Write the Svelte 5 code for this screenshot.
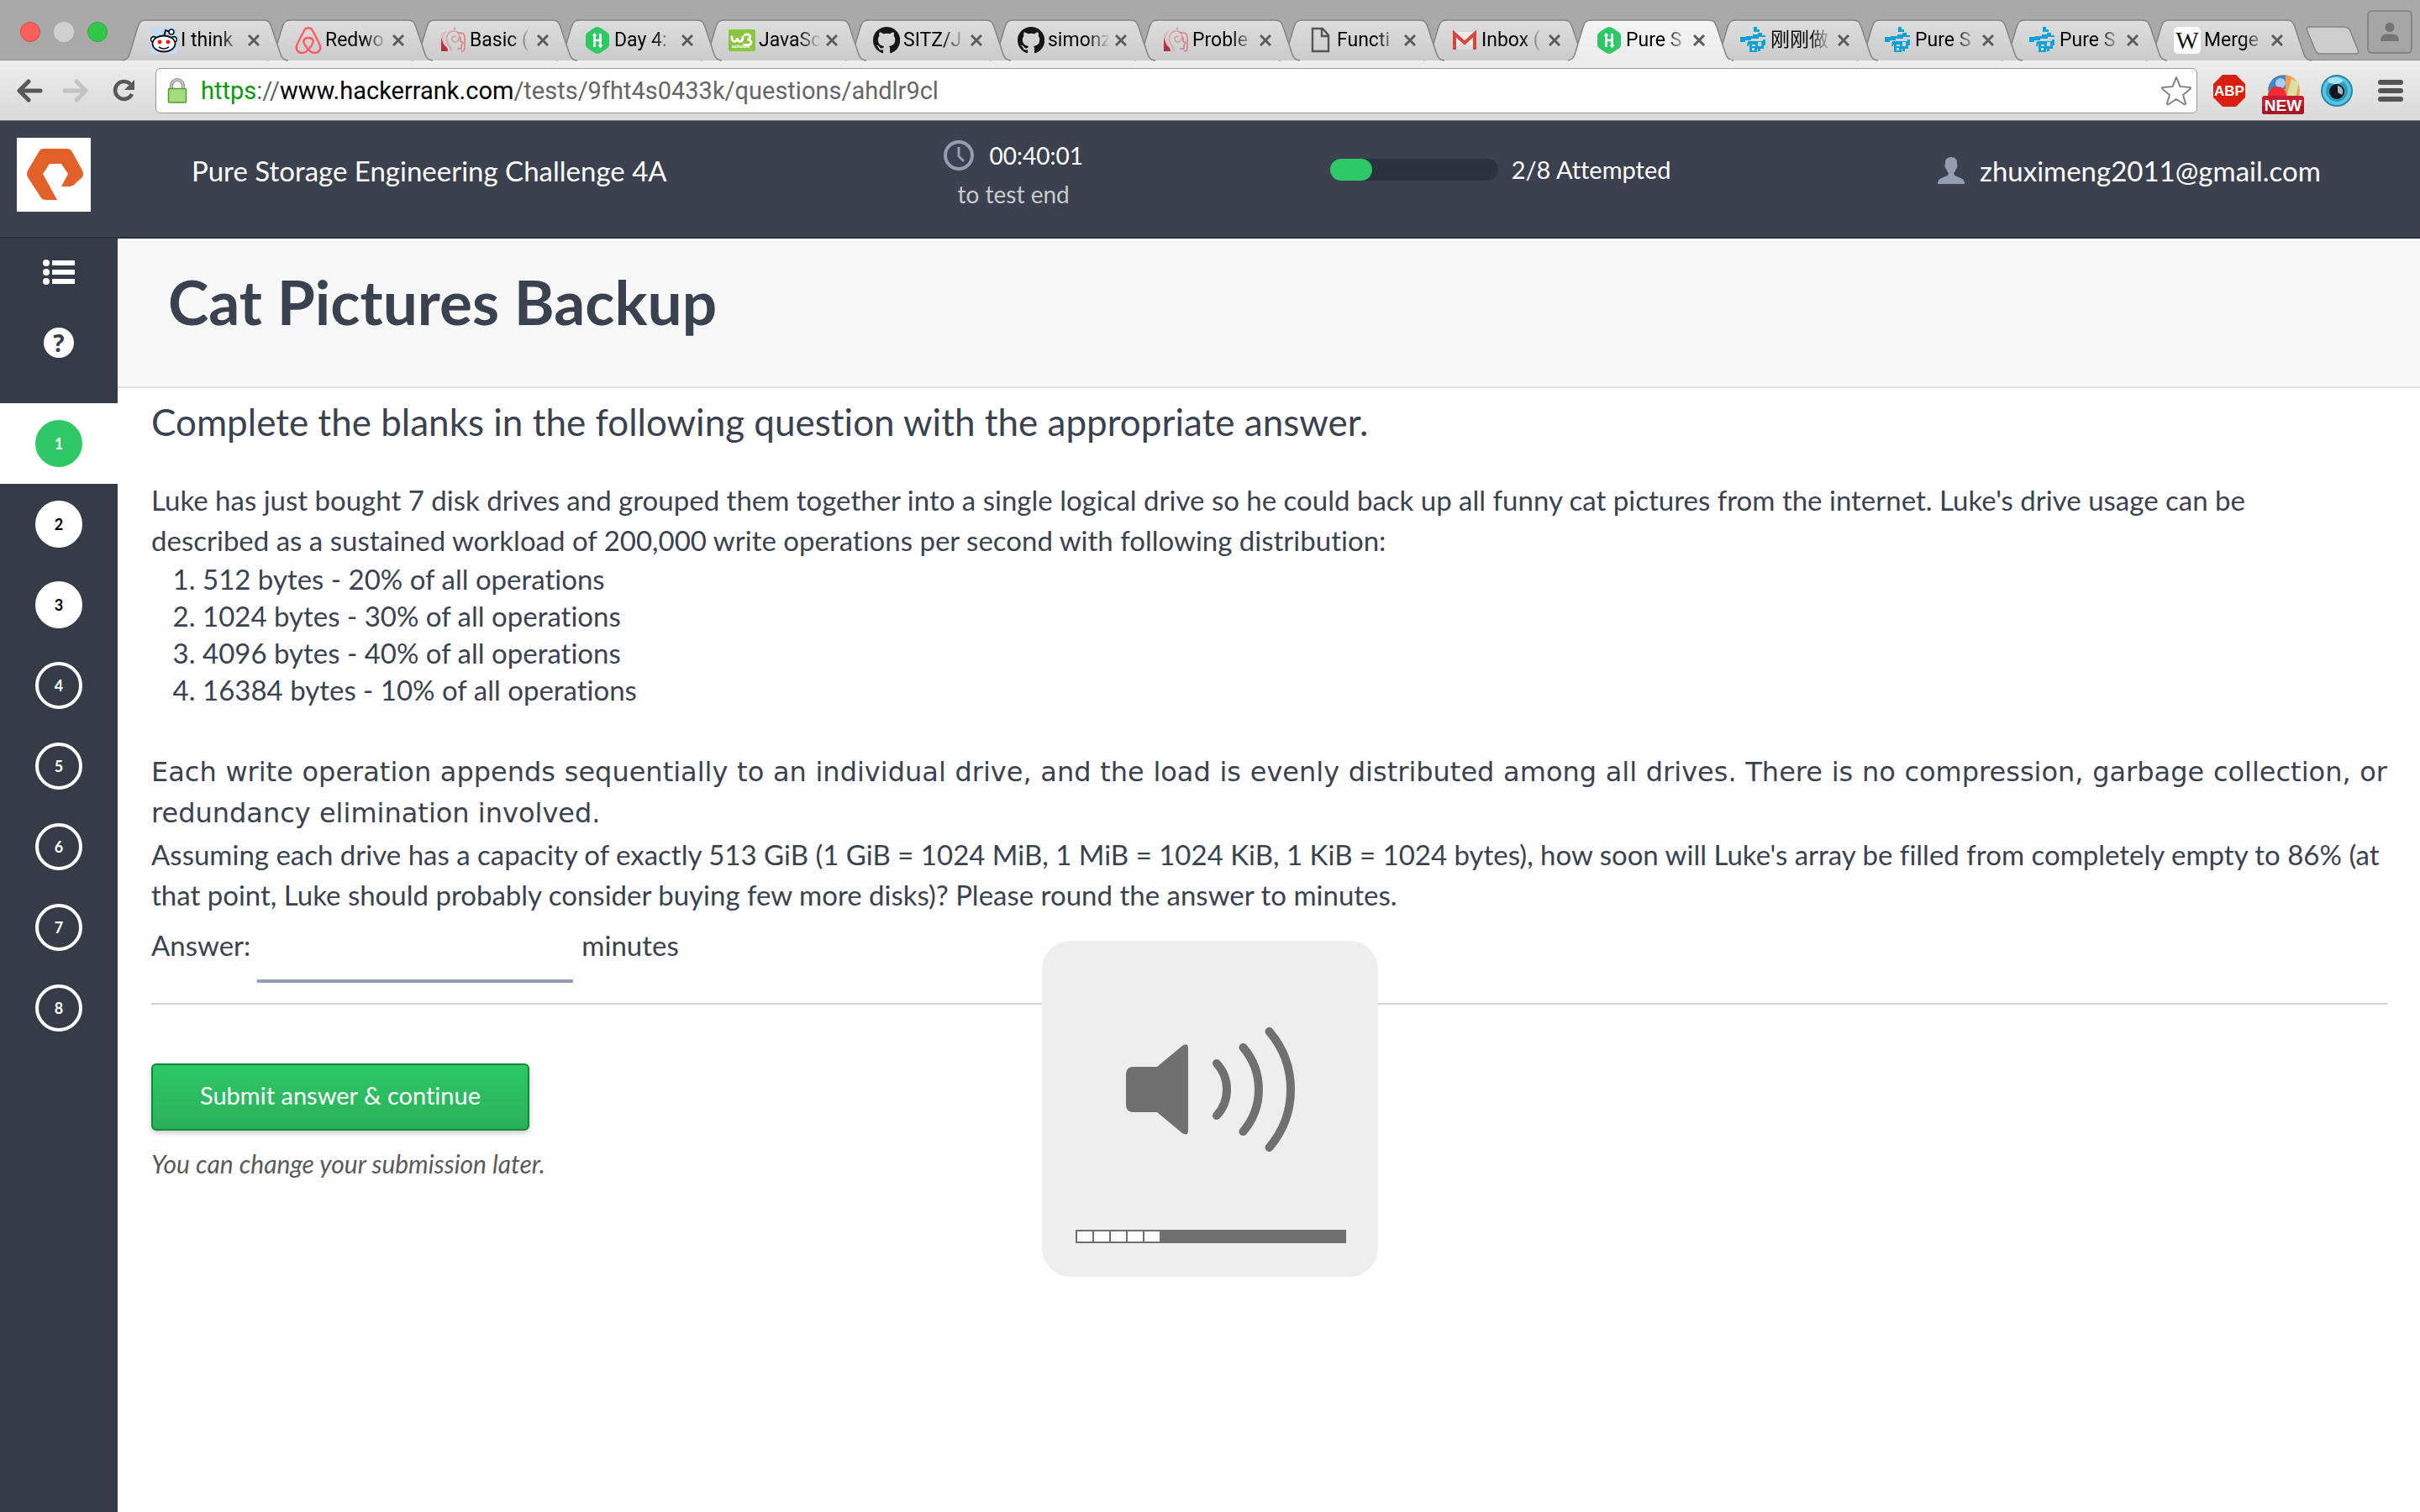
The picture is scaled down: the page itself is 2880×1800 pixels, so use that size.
<script>
  const tabs = [
    { icon: 'reddit', title: 'I think' },
    { icon: 'airbnb', title: 'Redwo' },
    { icon: 'geeks', title: 'Basic (' },
    { icon: 'hacker', title: 'Day 4:' },
    { icon: 'w3', title: 'JavaSc' },
    { icon: 'github', title: 'SITZ/J' },
    { icon: 'github', title: 'simonz' },
    { icon: 'geeks', title: 'Proble' },
    { icon: 'file', title: 'Functi' },
    { icon: 'gmail', title: 'Inbox (' },
    { icon: 'hacker', title: 'Pure S', active: true },
    { icon: 'forum', title: '刚刚做' },
    { icon: 'forum', title: 'Pure S' },
    { icon: 'forum', title: 'Pure S' },
    { icon: 'wiki', title: 'Merge' }
  ];

  const questions = [
    { n: 1, state: 'current' },
    { n: 2, state: 'done' },
    { n: 3, state: 'done' },
    { n: 4, state: 'open' },
    { n: 5, state: 'open' },
    { n: 6, state: 'open' },
    { n: 7, state: 'open' },
    { n: 8, state: 'open' }
  ];

  const workload = [
    '512 bytes - 20% of all operations',
    '1024 bytes - 30% of all operations',
    '4096 bytes - 40% of all operations',
    '16384 bytes - 10% of all operations'
  ];

  const volumeCells = [0, 1, 2, 3, 4];
  const attempted = 2;
  let answer = $state('');
</script>

{#snippet favicon(name)}
  <svg class="favicon" viewBox="0 0 32 32" aria-hidden="true">
    {#if name === 'reddit'}
      <rect width="32" height="32" fill="#c4dcf5" />
      <path d="M16 12l2-8 6 2" fill="none" stroke="#111" stroke-width="2" />
      <circle cx="25" cy="6" r="3" fill="#fff" stroke="#111" stroke-width="1.6" />
      <circle cx="4" cy="15" r="3.4" fill="#fff" stroke="#111" stroke-width="1.6" />
      <circle cx="28" cy="15" r="3.4" fill="#fff" stroke="#111" stroke-width="1.6" />
      <ellipse cx="16" cy="20" rx="13.5" ry="9.5" fill="#fff" stroke="#111" stroke-width="1.8" />
      <circle cx="11" cy="18" r="2.4" fill="#f11" />
      <circle cx="21" cy="18" r="2.4" fill="#f11" />
      <path d="M10 24q6 4 12 0" fill="none" stroke="#111" stroke-width="1.6" />
    {:else if name === 'airbnb'}
      <path
        d="M16 27C11 21 10 18 10.500 16.500C11 14 13 13 16 13s5 1 5.500 3.500C22 18 21 21 16 27zM16 27c-4 4.500-9 5-12 2.500c-2.500-2-3-4.500-1.500-8C5 15.500 9 8 11.500 3.500C13 .500 19 .500 20.500 3.500C23 8 27 15.500 29.500 21.500c1.500 3.500 1 6-1.500 8c-3 2.500-8 2-12-2.500z"
        fill="none" stroke="#ff5a5f" stroke-width="2.400" stroke-linejoin="round" />
    {:else if name === 'geeks'}
      <path d="M3 8c3-3 6-3 6-3c-4 4-5 8-3 13c2 4 4 7 4 11H2V12q0-3 1-4z" fill="#e3b9bc" />
      <path d="M2 12q2 9 5 11q3 2 3 6H2z" fill="#b92d40" />
      <path d="M14 29c1-4-4-7-5-11C7 11 11 5 17 5s8 5 6 10c-2 4-7 4-8 0c-1-3 3-5 5-3" fill="none" stroke="#cfa9ab" stroke-width="1.800" />
      <path d="M21 7h4c4 0 5 3 5 6v12c0 3-1 4-4 4M25 12v5l3 2-2 3v4h-5" fill="none" stroke="#d98088" stroke-width="1.600" />
      <circle cx="18" cy="2" r="1.400" fill="#d3a0a4" />
    {:else if name === 'hacker'}
      <path d="M16 0q2 0 5 2l6 4q3 2 3 4v12q0 2-3 4l-6 4q-3 2-5 2t-5-2l-6-4q-3-2-3-4V10q0-2 3-4l6-4q3-2 5-2z" fill="#2ec866" />
      <path d="M12.500 9v15M19.500 8v15M12.500 16h7" fill="none" stroke="#fff" stroke-width="2.600" />
      <path d="M9.500 10.500l3-3.500 3 3.500zM16.500 21.500h6l-3 4z" fill="#fff" />
    {:else if name === 'w3'}
      <rect y="3" width="32" height="26" rx="2" fill="#8cc63f" />
      <path d="M4 12c0 7 6 7 6.500 1c.500 6 6.500 6 6.500-1M19.500 9.500c7-3 8 5 3 5.500c7 0 6 9-4 6" fill="none" stroke="#fff" stroke-width="2.800" stroke-linecap="round" />
      <text x="4" y="25" class="tiny">schools</text>
    {:else if name === 'github'}
      <path
        d="M16 0A16 16 0 0 0 11 31.200c.800.100 1.100-.400 1.100-.800v-3c-4.500 1-5.400-1.900-5.400-1.900c-.700-1.900-1.800-2.400-1.800-2.400c-1.400-1 .100-1 .100-1c1.600.100 2.500 1.700 2.500 1.700c1.400 2.400 3.800 1.700 4.700 1.300c.100-1 .600-1.700 1-2.100c-3.600-.400-7.300-1.800-7.300-7.900c0-1.700.600-3.200 1.600-4.300c-.200-.400-.700-2 .200-4.200c0 0 1.300-.400 4.400 1.600a15 15 0 0 1 8 0c3-2 4.400-1.600 4.400-1.600c.900 2.200.300 3.800.200 4.200c1 1.100 1.600 2.600 1.600 4.300c0 6.100-3.700 7.500-7.300 7.900c.600.500 1.100 1.500 1.100 3v4.400c0 .400.300.900 1.100.800A16 16 0 0 0 16 0z"
        fill="#171515" />
    {:else if name === 'file'}
      <path d="M7 2h12l7 8v19H7zM18 2v9h8" fill="none" stroke="#555" stroke-width="2.400" />
    {:else if name === 'gmail'}
      <rect x="2" y="6" width="28" height="21" fill="#eee" />
      <path d="M2 27l14-12 14 12z" fill="#ddd" />
      <path d="M4 27V8l12 11L28 8v19" fill="none" stroke="#dc4437" stroke-width="4" />
    {:else if name === 'forum'}
      <path d="M16 0h4v3h3v3h-7V3z" fill="#0aa2d8" />
      <path d="M0 12h7v-1h8V9h6V7h5v3h4v2h-8v2h-9v2H6v2H0z" fill="#0aa2d8" />
      <path d="M9 17h18v-2h3v7h-2v4h-4v3h-3v-3h-1v4H11v-9h-1v2H8z" fill="#0aa2d8" />
      <path d="M14 21h4v2h-4zM14 25h3v3h-3zM21 18h4v5h-4z" fill="#d6d6d6" />
    {:else}
      <rect width="32" height="32" rx="5" fill="#fff" />
      <text x="16" y="26" class="wiki">W</text>
    {/if}
  </svg>
{/snippet}

<div class="screen">
  <div class="browser">
    <div class="strip">
      <div class="lights">
        <button class="light red" aria-label="Close window"></button>
        <button class="light gray" aria-label="Minimise window"></button>
        <button class="light green" aria-label="Zoom window"></button>
      </div>
      <ul class="tabs">
        {#each tabs as tab, i}
          <li class="tab" class:active={tab.active} style:z-index={tab.active ? 20 : 15 - i}>
            <svg class="tab-shape" viewBox="0 0 198 50" aria-hidden="true">
              <defs>
                <linearGradient id="tabfill{i}" x1="0" y1="0" x2="0" y2="1">
                  <stop offset="0" stop-color={tab.active ? '#f5f5f5' : '#dedede'} />
                  <stop offset="1" stop-color={tab.active ? '#ebebeb' : '#cbcbcb'} />
                </linearGradient>
              </defs>
              <path
                d="M0 49C6 48 7 45 9 39L18 9C20 3 22 1 28 1H167C173 1 175 3 177 9L187 39C189 45 190 48 197 49"
                fill="url(#tabfill{i})" stroke="#858585" stroke-width="1.500" />
              {#if tab.active}<rect x="3" y="48" width="192" height="2" fill="#ebebeb" />{/if}
            </svg>
            <a class="tab-link" href="#tab-{i}">
              {@render favicon(tab.icon)}
              <span class="tab-title">{tab.title}</span>
            </a>
            <button class="tab-close" aria-label="Close tab">
              <svg viewBox="0 0 14 14" aria-hidden="true"><path d="M1 1l12 12M13 1L1 13" stroke="#5c5c5c" stroke-width="3" /></svg>
            </button>
          </li>
        {/each}
      </ul>
      <button class="new-tab" aria-label="New tab">
        <svg viewBox="0 0 64 34" aria-hidden="true">
          <path d="M5 1H45Q51 1 53 6L62 28Q64 33 59 33H18Q13 33 11 28L2 6Q0 1 5 1z" fill="#cecece" stroke="#858585" stroke-width="1.500" />
        </svg>
      </button>
      <button class="profile" aria-label="Profile">
        <svg viewBox="0 0 24 24" aria-hidden="true">
          <ellipse cx="12" cy="6" rx="6" ry="6" fill="#747474" />
          <path d="M0 24q0-9 8-9h8q8 0 8 9z" fill="#747474" />
        </svg>
      </button>
    </div>

    <div class="toolbar">
      <button class="tool back" aria-label="Back">
        <svg viewBox="0 0 32 28" aria-hidden="true"><path d="M28 14H4M14 3L3 14l11 11" fill="none" stroke="#585858" stroke-width="5" stroke-linecap="round" stroke-linejoin="round" /></svg>
      </button>
      <button class="tool forward" aria-label="Forward">
        <svg viewBox="0 0 32 28" aria-hidden="true"><path d="M3 14h24M17 3l11 11-11 11" fill="none" stroke="#c3c3c3" stroke-width="5" stroke-linecap="round" stroke-linejoin="round" /></svg>
      </button>
      <button class="tool reload" aria-label="Reload">
        <svg viewBox="0 0 28 28" aria-hidden="true">
          <path d="M22 6A10.500 10.500 0 1 0 24 18" fill="none" stroke="#585858" stroke-width="4.500" />
          <path d="M27 1v12H15z" fill="#585858" />
        </svg>
      </button>
      <div class="omnibox">
        <svg class="lock" viewBox="0 0 24 30" aria-hidden="true">
          <path d="M5 15V9a7 7 0 0 1 14 0v6" fill="none" stroke="#909090" stroke-width="4" />
          <path d="M5 15V9a7 7 0 0 1 14 0v6" fill="none" stroke="#d4d4d4" stroke-width="1.500" />
          <rect x="1.500" y="12.500" width="21" height="16.500" rx="1" fill="#a6dc7e" stroke="#559a35" stroke-width="1.500" />
        </svg>
        <a class="url" href="#address"><span class="scheme">https</span>://<span class="host">www.hackerrank.com</span>/tests/9fht4s0433k/questions/ahdlr9cl</a>
        <button class="star" aria-label="Bookmark this page">
          <svg viewBox="0 0 36 36" aria-hidden="true">
            <path d="M18 2l4.500 11L34 14q2 0 .500 2L26 23l3 10q0 2-2 1l-9-6-9 6q-2 1-2-1l3-10-8.500-7Q0 14 2 14l11.500-1z" fill="#fff" stroke="#858585" stroke-width="2" stroke-linejoin="round" />
          </svg>
        </button>
      </div>
      <button class="ext small" aria-label="Adblock Plus">
        <svg viewBox="0 0 38 38" aria-hidden="true">
          <path d="M11 0h16l11 11v16L27 38H11L0 27V11z" fill="#d92010" />
          <text x="19" y="25" class="abp">ABP</text>
        </svg>
      </button>
      <button class="ext wide" aria-label="New extension">
        <svg viewBox="0 0 50 48" aria-hidden="true">
          <circle cx="26" cy="20" r="19" fill="#f0a050" />
          <path d="M25 20V2A18 18 0 0 0 7 20z" fill="#4a8fd0" />
          <path d="M12 7a18 18 0 0 1 16-5v16H8z" fill="#3f87c9" />
          <circle cx="22" cy="11" r="6" fill="#a9cdf0" />
          <path d="M35 6l9 4-4 18H29z" fill="#d9dfa6" />
          <circle cx="18" cy="26" r="11" fill="#f42a34" />
          <rect y="26" width="50" height="22" rx="3" fill="#c22030" />
          <rect y="38" width="50" height="10" rx="3" fill="#a81622" />
          <text x="25" y="44" class="new">NEW</text>
        </svg>
      </button>
      <button class="ext small" aria-label="Eye extension">
        <svg viewBox="0 0 38 38" aria-hidden="true">
          <circle cx="19" cy="19" r="18" fill="#55c6e2" stroke="#2c86a5" stroke-width="2" />
          <circle cx="19" cy="19" r="13" fill="#2b9cc0" />
          <circle cx="19" cy="20" r="9" fill="#10161a" />
          <path d="M20 13a7 7 0 0 1 5 11l-5-3z" fill="#a9b4b8" />
          <ellipse cx="17" cy="7" rx="9" ry="4" fill="#a6e2f0" />
        </svg>
      </button>
      <button class="ext menu" aria-label="Menu">
        <svg viewBox="0 0 30 26" aria-hidden="true"><path d="M3 3h24M3 13h24M3 23h24" stroke="#555" stroke-width="6" stroke-linecap="round" /></svg>
      </button>
    </div>
  </div>

  <header class="topbar">
    <a class="logo" href="#home" aria-label="Pure Storage">
      <svg viewBox="0 0 88 88" aria-hidden="true">
        <path d="M32 13H59Q64 13 66 17L78 39Q80 43 78 47L70 54Q67 58 62 58H53L61 43L53 31H39L31 43L48 74H35Q30 74 28 70L13 47Q11 43 13 39L26 17Q28 13 32 13z" fill="#e16128" />
      </svg>
    </a>
    <div class="test-name">Pure Storage Engineering Challenge 4A</div>
    <div class="timer">
      <div class="time">
        <svg viewBox="0 0 36 36" aria-hidden="true">
          <circle cx="18" cy="18" r="16" fill="none" stroke="#959eb0" stroke-width="4" />
          <path d="M18 8v11l6 6" fill="none" stroke="#959eb0" stroke-width="3" />
        </svg>
        <span>00:40:01</span>
      </div>
      <div class="until">to test end</div>
    </div>
    <div class="progress">
      <div class="track" role="progressbar" aria-label="Attempted" aria-valuemin="0" aria-valuemax="8" aria-valuenow={attempted}>
        <div class="fill" style:width="{(attempted / questions.length) * 100}%"></div>
      </div>
      <span>{attempted}/{questions.length} Attempted</span>
    </div>
    <div class="user">
      <svg viewBox="0 0 32 32" aria-hidden="true">
        <path d="M16 0c5 0 7.500 3 7 8l.500 2q0 3-1.500 4q-1 3-2.500 4.500q-.500 2 1 3.500l8 3.500q3.500 1.500 3.500 6.500H0q0-5 3.500-6.500l8-3.500q1.500-1.500 1-3.500Q11 17 10 14q-1.500-1-1.500-4L9 8c-.500-5 2-8 7-8z" fill="#959eb0" />
      </svg>
      <span>zhuximeng2011@gmail.com</span>
    </div>
  </header>

  <div class="body">
    <nav class="sidebar" aria-label="Questions">
      <a class="side-icon" href="#list" aria-label="Question list">
        <svg class="list-icon" viewBox="0 0 38 32" aria-hidden="true">
          <circle cx="4" cy="5" r="4" fill="#fff" /><circle cx="4" cy="16" r="4" fill="#fff" /><circle cx="4" cy="27" r="4" fill="#fff" />
          <path d="M11 5h27M11 16h27M11 27h27" stroke="#fff" stroke-width="6" />
        </svg>
      </a>
      <a class="side-icon help" href="#help" aria-label="Help"><span>?</span></a>
      <ol class="questions">
        {#each questions as q}
          <li class={q.state}><a href="#question-{q.n}">{q.n}</a></li>
        {/each}
      </ol>
    </nav>

    <main>
      <div class="heading"><h1>Cat Pictures Backup</h1></div>
      <div class="content">
        <h2>Complete the blanks in the following question with the appropriate answer.</h2>
        <p>Luke has just bought 7 disk drives and grouped them together into a single logical drive so he could back up all funny cat pictures from the internet. Luke's drive usage can be<br />described as a sustained workload of 200,000 write operations per second with following distribution:</p>
        <ol class="workload">
          {#each workload as line}<li>{line}</li>{/each}
        </ol>
        <p class="note-block">Each write operation appends sequentially to an individual drive, and the load is evenly distributed among all drives. There is no compression, garbage collection, or redundancy elimination involved.</p>
        <p>Assuming each drive has a capacity of exactly 513 GiB (1 GiB = 1024 MiB, 1 MiB = 1024 KiB, 1 KiB = 1024 bytes), how soon will Luke's array be filled from completely empty to 86% (at that point, Luke should probably consider buying few more disks)? Please round the answer to minutes.</p>
        <div class="answer">
          <label for="answer">Answer:</label>
          <input id="answer" type="text" bind:value={answer} />
          <span>minutes</span>
        </div>
        <hr />
        <button class="submit">Submit answer &amp; continue</button>
        <p class="later">You can change your submission later.</p>
      </div>
    </main>
  </div>

  <div class="volume" role="status" aria-label="Volume">
    <svg viewBox="0 0 400 400" aria-hidden="true">
      <path d="M109 150H137L167 125Q174 121 174 128V226Q174 233 167 229L137 204H109Q100 204 100 195V159Q100 150 109 150z" fill="#707070" />
      <g fill="none" stroke="#707070" stroke-width="10" stroke-linecap="round">
        <path d="M208 146A46 46 0 0 1 208 208" />
        <path d="M239.500 127A77 77 0 0 1 239.500 227" />
        <path d="M270.500 108A106 106 0 0 1 270.500 246" />
      </g>
      <rect x="40" y="344" width="322" height="16" fill="#707070" />
      {#each volumeCells as cell}
        <rect x={42 + cell * 20} y="346" width="18" height="12" fill="#fff" />
      {/each}
    </svg>
  </div>
</div>

<style>
  :global(body) {
    background: #fff;
  }
  .screen {
    --ink: #3b424f;
    --muted: #959eb0;
    display: flex;
    flex-direction: column;
    min-height: 100vh;
    font-family: Lato, sans-serif;
    font-variant-ligatures: none;
    color: var(--ink);
  }
  button {
    padding: 0;
    border: 0;
    background: none;
    font: inherit;
    cursor: pointer;
  }
  svg {
    display: block;
    width: 100%;
  }
  a {
    color: inherit;
    text-decoration: none;
  }
  ul, ol {
    margin: 0;
    padding: 0;
    list-style: none;
  }

  .browser {
    font-family: Roboto, "Noto Sans CJK SC", sans-serif;
    border-bottom: 1px solid #77797d;
  }
  .strip {
    display: flex;
    align-items: flex-start;
    height: 71px;
    padding: 0 9px 0 24px;
    background: #a9a9a9;
    border-bottom: 1px solid #8c8c8c;
  }
  .lights {
    display: flex;
    gap: 16px;
    padding: 26px 18px 0 0;
  }
  .light {
    width: 24px;
    height: 24px;
    border-radius: 50%;
  }
  .red { background: #fc605b; border: 1px solid #e0443e; }
  .gray { background: #d0d0d0; }
  .green { background: #33c748; border: 1px solid #24a836; }
  .tabs {
    display: flex;
    padding-top: 23px;
  }
  .tab {
    position: relative;
    display: flex;
    align-items: center;
    justify-content: space-between;
    box-sizing: border-box;
    width: 172px;
    height: 50px;
    padding: 0 9px 0 33px;
  }
  .tab-shape {
    position: absolute;
    left: 0;
    top: 0;
    width: 198px;
    height: 50px;
  }
  .tab-link {
    position: relative;
    display: flex;
    align-items: center;
    gap: 4px;
  }
  .favicon {
    flex: none;
    width: 32px;
    height: 32px;
  }
  .tiny { font: 700 6px Roboto, sans-serif; fill: #fff; }
  .wiki { font: 29px "Liberation Serif", serif; text-anchor: middle; fill: #111; }
  .abp { font: 700 17px "Liberation Sans", sans-serif; text-anchor: middle; fill: #fff; }
  .new { font: 700 19px "Liberation Sans", sans-serif; text-anchor: middle; fill: #fff; }
  .tab-title {
    width: 74px;
    white-space: nowrap;
    font-size: 23px;
    line-height: 34px;
    color: #000;
    mask-image: linear-gradient(to right, #000 46px, transparent 74px);
  }
  .tab-close {
    position: relative;
    width: 14px;
  }
  .new-tab {
    width: 64px;
    margin: 31px 0 0 18px;
  }
  .profile {
    box-sizing: border-box;
    width: 54px;
    height: 52px;
    margin: 12px 0 0 auto;
    padding: 0 14px;
    border: 2px solid #858585;
    border-radius: 6px;
    background: #a5a5a5;
  }

  .toolbar {
    display: flex;
    align-items: center;
    height: 71px;
    padding: 0 20px;
    background: linear-gradient(#ededed, #d9d9d9);
  }
  .tool { flex: none; }
  .back { width: 32px; margin-right: 22px; }
  .forward { width: 32px; margin-right: 27px; }
  .reload { width: 28px; margin-right: 24px; }
  .omnibox {
    flex: 1;
    display: flex;
    align-items: center;
    box-sizing: border-box;
    height: 54px;
    margin-right: 19px;
    padding: 0 6px 0 13px;
    border: 1px solid #999;
    border-radius: 6px;
    background: #fff;
  }
  .lock { flex: none; width: 24px; margin-right: 16px; }
  .url {
    flex: 1;
    font-size: 29px;
    line-height: 40px;
    color: #666;
  }
  .scheme { color: #0a9a0a; }
  .host { color: #000; }
  .star { width: 36px; }
  .ext { flex: none; margin-right: 20px; }
  .small { width: 38px; }
  .wide { width: 50px; padding-top: 8px; }
  .menu { width: 30px; margin: 0 0 0 10px; }

  .topbar {
    display: grid;
    grid-template-columns: 228px 78fr 40fr 63fr 50fr;
    align-items: start;
    padding-bottom: 28px;
    background: #3b414e;
    border-bottom: 2px solid #2b313c;
    color: #fff;
  }
  .logo {
    width: 88px;
    margin: 20px 0 0 20px;
    background: #fff;
  }
  .test-name, .user {
    padding-top: 35px;
    font-size: 33px;
    line-height: 48px;
    white-space: nowrap;
  }
  .timer {
    justify-self: start;
    padding-top: 18px;
    font-size: 28px;
    line-height: 46px;
    text-align: center;
  }
  .time {
    display: flex;
    gap: 18px;
  }
  .time svg { width: 36px; }
  .until { color: #c8cacd; }
  .progress {
    display: flex;
    align-items: center;
    gap: 16px;
    padding-top: 35px;
    font-size: 29px;
    line-height: 46px;
  }
  .track {
    width: 200px;
    height: 26px;
    border-radius: 13px;
    background: #2b3341;
  }
  .fill {
    height: 100%;
    border-radius: 13px;
    background: #2ec866;
  }
  .user {
    display: flex;
    align-items: center;
    gap: 18px;
  }
  .user svg { width: 32px; }

  .body {
    flex: 1;
    display: flex;
  }
  .sidebar {
    flex: none;
    width: 140px;
    background: #353b47;
    color: #fff;
  }
  .side-icon {
    display: flex;
    align-items: center;
    justify-content: center;
    height: 80px;
  }
  .help {
    height: 88px;
    margin-bottom: 28px;
  }
  .list-icon { width: 38px; }
  .help span {
    width: 36px;
    border-radius: 50%;
    background: #fff;
    color: #353b47;
    font: 700 28px/36px "Open Sans", sans-serif;
    text-align: center;
  }
  .questions li {
    display: flex;
    align-items: center;
    justify-content: center;
    height: 96px;
  }
  .questions a {
    box-sizing: border-box;
    width: 56px;
    border: 4px solid #fff;
    border-radius: 50%;
    font-size: 18px;
    font-weight: 700;
    line-height: 48px;
    text-align: center;
  }
  .current { background: #fff; }
  .questions .current a { background: #2ec866; border-color: #2ec866; }
  .questions .done a { background: #fff; color: #000; }

  main {
    flex: 1;
    min-width: 0;
  }
  .heading {
    padding: 31px 60px 57px;
    background: #f8f8f8;
    border-bottom: 2px solid #e0e0e0;
  }
  h1 {
    margin: 0;
    font-size: 73px;
    font-weight: 700;
    line-height: 88px;
  }
  .content {
    padding: 10px 39px 40px 40px;
    font-size: 33px;
    line-height: 48px;
  }
  h2 {
    margin: 0 0 39px;
    font-size: 44px;
    font-weight: 400;
    line-height: 60px;
  }
  p { margin: 0; }
  .workload {
    padding-left: 61px;
    list-style: decimal;
    line-height: 44px;
  }
  .content .note-block {
    margin-top: 52px;
    font-family: "DejaVu Sans", sans-serif;
    font-size: 32px;
    line-height: 49px;
    text-align: justify;
  }
  .answer {
    display: flex;
    align-items: flex-start;
    margin-top: 12px;
  }
  .answer input {
    box-sizing: border-box;
    width: 376px;
    height: 69px;
    margin: 0 10px 0 8px;
    padding: 0 8px;
    border: 0;
    border-bottom: 4px solid var(--muted);
    background: none;
    font: inherit;
    color: inherit;
    outline: 0;
  }
  hr {
    height: 2px;
    margin: 24px 0 70px;
    border: 0;
    background: #d2d2d2;
    box-shadow: 0 2px 6px rgba(0, 0, 0, 0.06);
  }
  .submit {
    display: block;
    height: 80px;
    padding: 0 56px 4px;
    border: 2px solid #0b8a3a;
    border-radius: 6px;
    background: linear-gradient(#2ec866, #2bb05b);
    box-shadow: 0 3px 6px rgba(0, 0, 0, 0.2);
    font-size: 29px;
    color: #fff;
  }
  .content .later {
    margin-top: 19px;
    font-size: 30px;
    font-style: italic;
    line-height: 40px;
    color: #5a5a5a;
  }

  .volume {
    position: fixed;
    left: 50%;
    bottom: 280px;
    width: 400px;
    margin-left: -200px;
    border-radius: 34px;
    background: #eee;
  }
</style>
